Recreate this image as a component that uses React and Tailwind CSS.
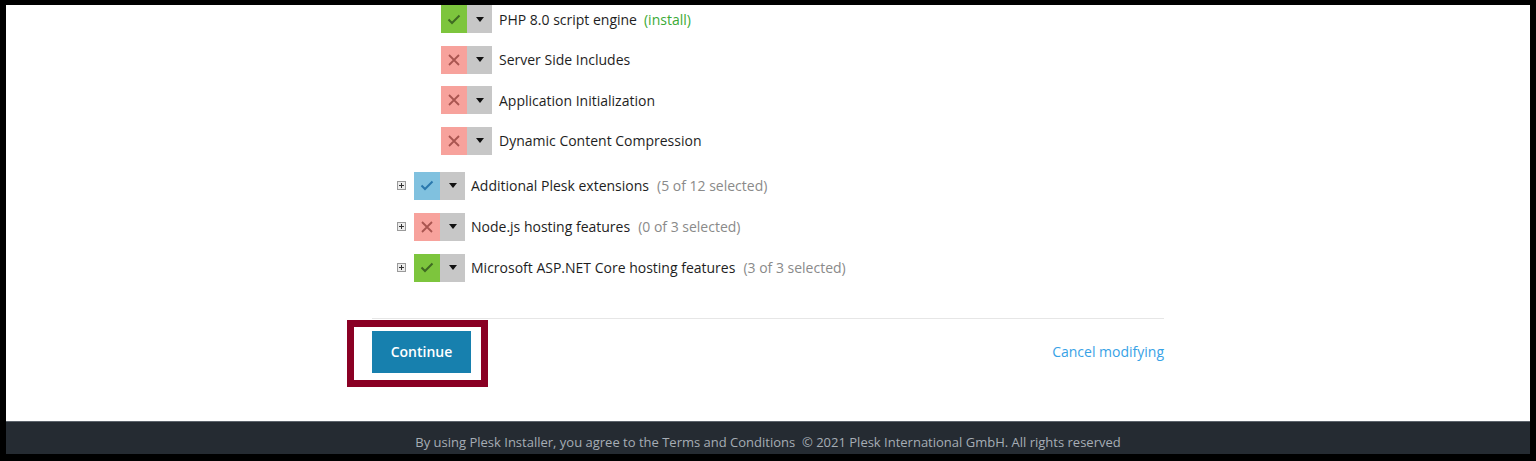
import React from 'react';

const font = { fontFamily: '"Open Sans", "Noto Sans", sans-serif' };

const Check = ({ color }) => (
  <svg width="14" height="11" viewBox="0 0 14 11" fill="none">
    <path d="M1.5 5.5 L5 9 L12.5 1.5" stroke={color} strokeWidth="2" />
  </svg>
);

const Cross = () => (
  <svg width="12" height="12" viewBox="0 0 12 12" fill="none">
    <path d="M1 1 L11 11 M11 1 L1 11" stroke="#a95550" strokeWidth="1.8" />
  </svg>
);

const Caret = () => (
  <svg width="8" height="5" viewBox="0 0 8 5">
    <path d="M0 0 H8 L4 5 Z" fill="#111" />
  </svg>
);

const Plus = () => (
  <span className="flex h-[9px] w-[9px] items-center justify-center border border-[#9a9a9a] bg-[#ececec]">
    <svg width="5" height="5" viewBox="0 0 5 5">
      <path d="M2.5 0 V5 M0 2.5 H5" stroke="#333" strokeWidth="1" />
    </svg>
  </span>
);

const StateBox = ({ state }) => {
  const bg = state === 'on' ? 'bg-[#7dc53d]' : state === 'partial' ? 'bg-[#80c1df]' : 'bg-[#f7a29c]';
  return (
    <div className="flex h-[28px]">
      <div className={`flex w-[26px] items-center justify-center ${bg}`}>
        {state === 'on' && <Check color="#3f6a22" />}
        {state === 'partial' && <Check color="#2a78ad" />}
        {state === 'off' && <Cross />}
      </div>
      <div className="flex w-[25px] items-center justify-center bg-[#c7c7c7]">
        <Caret />
      </div>
    </div>
  );
};

const subItems = [
  { label: 'PHP 8.0 script engine', state: 'on', extra: '(install)' },
  { label: 'Server Side Includes', state: 'off' },
  { label: 'Application Initialization', state: 'off' },
  { label: 'Dynamic Content Compression', state: 'off' },
];

const groups = [
  { label: 'Additional Plesk extensions', state: 'partial', count: '(5 of 12 selected)' },
  { label: 'Node.js hosting features', state: 'off', count: '(0 of 3 selected)' },
  { label: 'Microsoft ASP.NET Core hosting features', state: 'on', count: '(3 of 3 selected)' },
];

export default function App() {
  return (
    <div className="h-[461px] w-full bg-black pb-[7px] pl-[6px] pr-[6px] pt-[5px]" style={font}>
      <div className="flex h-full flex-col bg-white">
        <main className="flex-1">
          <div className="mx-auto w-[792px] text-[14px] text-[#1e1e1e]">
            <div className="flex flex-col gap-[12.5px] pl-[69px]">
              {subItems.map((it) => (
                <div key={it.label} className="flex items-center">
                  <StateBox state={it.state} />
                  <span className="ml-[7px]">{it.label}</span>
                  {it.extra && <span className="ml-[7px] text-[#3aaa35]">{it.extra}</span>}
                </div>
              ))}
            </div>
            <div className="mt-[17px] flex flex-col gap-[13px] pl-[25px]">
              {groups.map((g) => (
                <div key={g.label} className="flex items-center">
                  <Plus />
                  <span className="ml-[8px]">
                    <StateBox state={g.state} />
                  </span>
                  <span className="ml-[6px]">{g.label}</span>
                  <span className="ml-[8px] text-[#8a8a8a]">{g.count}</span>
                </div>
              ))}
            </div>
            <div className="mt-[36px] border-t border-[#e6e6e6] pt-[12px]">
              <div className="flex items-center justify-between">
                <div className="relative">
                  <button className="h-[42px] w-[99px] bg-[#1780ae] text-[14px] font-semibold text-white">
                    Continue
                  </button>
                  <div className="absolute left-[-25px] top-[-11px] h-[67px] w-[141px] border-[7px] border-[#8a0024]" />
                </div>
                <a className="text-[14px] text-[#37a2e6]">Cancel modifying</a>
              </div>
            </div>
          </div>
        </main>
        <footer className="flex h-[33px] items-center justify-center border-t border-[#5c636b] bg-[#252b32] pt-[9px] text-[13px] text-[#a6adb5]">
          <span>By using Plesk Installer, you agree to the Terms and Conditions&nbsp;&nbsp;© 2021 Plesk International GmbH. All rights reserved</span>
        </footer>
      </div>
    </div>
  );
}
